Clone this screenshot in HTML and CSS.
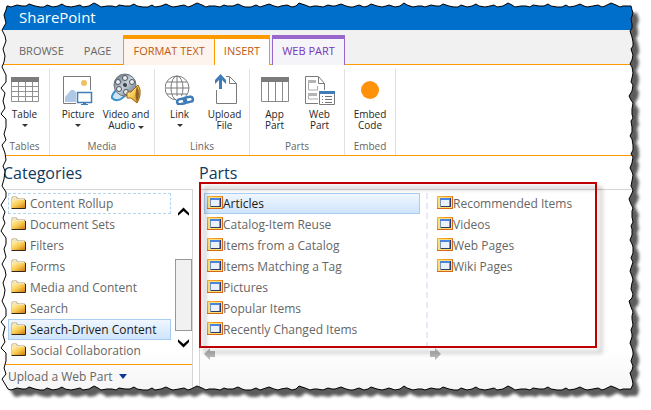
FILE: index.html
```html
<!DOCTYPE html>
<html lang="en">
<head>
    <meta charset="utf-8">
    <meta name="viewport" content="width=device-width, initial-scale=1.0">
    <title>SharePoint</title>
    <link rel="stylesheet" href="styles.css">
</head>

<body>
    <svg class="defs" aria-hidden="true">
        <defs>
            <linearGradient id="gold" x1="0" y1="0" x2="1" y2="1">
                <stop offset="0" stop-color="#fff3b0" />
                <stop offset=".5" stop-color="#f8c94f" />
                <stop offset="1" stop-color="#cf7a10" />
            </linearGradient>
            <linearGradient id="orange" x1="0" y1="0" x2="1" y2="1">
                <stop offset="0" stop-color="#ffb62e" />
                <stop offset="1" stop-color="#d0560e" />
            </linearGradient>
            <linearGradient id="metal" x1="0" y1="0" x2="1" y2="1">
                <stop offset="0" stop-color="#59636e" />
                <stop offset=".5" stop-color="#c9d3dc" />
                <stop offset="1" stop-color="#58626c" />
            </linearGradient>
            <symbol id="folder" viewBox="0 0 15 13">
                <path d="M.5 12V1.500L1.500.5h4l1.500 2H13.500l1 1V12z" fill="#a89878" />
                <path d="M1 2L2 1h3l1.500 2H13v2H1z" fill="#f5e6ba" />
                <path d="M1 4h13v8H1z" fill="url(#gold)" />
                <path d="M.5 12.500H14.500V4" fill="none" stroke="#332817" />
            </symbol>
            <symbol id="part" viewBox="0 0 16 13">
                <path d="M0 0h16v13H0z" fill="url(#orange)" />
                <path d="M1 1h14v11H1z" fill="#ffe078" />
                <path d="M3 2h10v9H3z" fill="#7d93b8" />
                <path d="M3 2h10v2H3z" fill="#4b83e0" />
                <path d="M4 4h8v6H4z" fill="#eaf1fc" />
                <path d="M13 2h1v9H4v-1h9z" fill="#2c3d63" />
                <path d="M15.500 1v12M0 12.500h16" stroke="#d6661a" />
            </symbol>
        </defs>
    </svg>

    <div class="page">
        <header>SharePoint</header>
        <nav>
            <a href="#">BROWSE</a>
            <a href="#">PAGE</a>
            <a href="#" class="tab format">FORMAT TEXT</a>
            <a href="#" class="tab insert">INSERT</a>
            <a href="#" class="tab webpart">WEB PART</a>
        </nav>

        <div class="ribbon">
            <section class="group tables">
                <div class="tools">
                    <button>
                        <svg class="icon" viewBox="0 0 30 32">
                            <path d="M1 4.500h28v24H1z" fill="#fff" />
                            <path d="M1.500 8v20.500h27V8M1 13.500h28M1 18.500h28M1 23.500h28M8.500 9v20M15.500 9v20M22.500 9v20" fill="none" stroke="#929292" />
                            <path d="M1 4h28v5H1z" fill="#7b7b7b" />
                        </svg>
                        <span>Table</span>
                        <i class="caret"></i>
                    </button>
                </div>
                <h2>Tables</h2>
            </section>
            <section class="group media">
                <div class="tools">
                    <button>
                        <svg class="icon" viewBox="0 0 30 32">
                            <path d="M.5 3.500h27v27H.5z" fill="#fff" stroke="#7b7b7b" />
                            <circle cx="21" cy="10" r="3" fill="#eec262" />
                            <path d="M2 29v-5l6-7h3l4 5v7z" fill="#aec8e6" />
                            <path d="M13 17h17v15H13z" fill="#fff" />
                            <path d="M14.500 19.500h14v10h-14z" fill="#fff" stroke="#3f7cb8" stroke-width="1.500" />
                            <path d="M20 30h3v1h2v1h-7v-1h2z" fill="#3f7cb8" />
                        </svg>
                        <span>Picture</span>
                        <i class="caret"></i>
                    </button>
                    <button>
                        <svg class="icon" viewBox="0 0 30 32">
                            <path d="M5 17q-5 6-4 8 4 4 9 1l5-4" fill="#cfe7f5" stroke="#3c93c7" stroke-width="2" />
                            <circle cx="14" cy="12" r="11" fill="url(#metal)" stroke="#6b747d" />
                            <g fill="#e9eef2" stroke="#4c5660">
                                <circle cx="14" cy="5" r="2.500" />
                                <circle cx="7" cy="9" r="2.500" />
                                <circle cx="8" cy="16" r="2.500" />
                                <circle cx="15" cy="19" r="2.500" />
                                <circle cx="21" cy="9" r="2.500" />
                            </g>
                            <circle cx="14" cy="12" r="2" fill="#38414a" />
                            <path d="M16 19h4l7-7q3 4 2 10-1 5-3 8l-6-5h-4z" fill="url(#gold)" stroke="#9a661d" />
                            <path d="M26 13q4 8 0 16-3-7 0-16" fill="#8d6329" />
                        </svg>
                        <span>Video and<br>Audio <i class="caret"></i></span>
                    </button>
                </div>
                <h2>Media</h2>
            </section>
            <section class="group links">
                <div class="tools">
                    <button>
                        <svg class="icon" viewBox="0 0 30 32">
                            <g fill="none" stroke="#7b7b7b">
                                <circle cx="12" cy="15" r="12" fill="#fff" />
                                <ellipse cx="12" cy="15" rx="6" ry="12" />
                                <path d="M12 3v24M0 15h24M2 9h20M2 21h20" />
                            </g>
                            <path d="M11 23h19v9H11z" fill="#fff" />
                            <g fill="none" stroke="#3f7cb8" stroke-width="2.500">
                                <rect x="12" y="26" width="9" height="5" rx="2.500" transform="rotate(-12 16 28)" />
                                <rect x="19" y="24" width="9" height="5" rx="2.500" transform="rotate(-12 24 27)" />
                            </g>
                        </svg>
                        <span>Link</span>
                        <i class="caret"></i>
                    </button>
                    <button>
                        <svg class="icon" viewBox="0 0 30 32">
                            <path d="M6.500 30.500v-27h13l7 7v20z" fill="#fff" stroke="#7b7b7b" />
                            <path d="M19.500 4v6.500h7" fill="none" stroke="#7b7b7b" />
                            <path d="M4 2h12v15H4z" fill="#fff" />
                            <path d="M10.500 1L16 7v4l-4-4v9H9V7l-4 4V7z" fill="#3f7cb8" />
                        </svg>
                        <span>Upload<br>File</span>
                    </button>
                </div>
                <h2>Links</h2>
            </section>
            <section class="group parts">
                <div class="tools">
                    <button>
                        <svg class="icon" viewBox="0 0 30 32">
                            <path d="M1.500 4.500h27v24h-27zM8.500 8v20M15.500 8v20M22.500 8v20" fill="#fff" stroke="#8a8a8a" />
                            <path d="M1 4h28v5H1z" fill="#7b7b7b" />
                        </svg>
                        <span>App<br>Part</span>
                    </button>
                    <button>
                        <svg class="icon" viewBox="0 0 30 32">
                            <path d="M.5 30.500v-27h13l6 7v20z" fill="#fff" stroke="#7b7b7b" />
                            <path d="M13.500 4v6.500h6" fill="none" stroke="#7b7b7b" />
                            <path d="M3.500 8v9h9v-4M3.500 20v6h10" fill="none" stroke="#aaa" />
                            <path d="M3 7h8v3H3zM3 20h9v3H3z" fill="#b5b5b5" />
                            <path d="M13 17h17v15H13z" fill="#fff" />
                            <path d="M14.500 18.500h15v13h-15z" fill="#fff" stroke="#7b7b7b" />
                            <path d="M14 18h16v3H14z" fill="#3f7cb8" />
                            <path d="M17 23.500h1m2 0h7M17 26.500h1m2 0h7M17 29.500h1m2 0h7" stroke="#777" />
                        </svg>
                        <span>Web<br>Part</span>
                    </button>
                </div>
                <h2>Parts</h2>
            </section>
            <section class="group embed">
                <div class="tools">
                    <button>
                        <svg class="icon" viewBox="0 0 30 32">
                            <circle cx="15" cy="17" r="9" fill="#ff9208" />
                        </svg>
                        <span>Embed<br>Code</span>
                    </button>
                </div>
                <h2>Embed</h2>
            </section>
        </div>

        <main>
            <section class="categories">
                <h1>Categories</h1>
                <div class="panel">
                    <div class="chooser">
                        <ul>
                            <li><button class="focused"><svg class="folder"><use href="#folder" /></svg>Content Rollup</button></li>
                            <li><button><svg class="folder"><use href="#folder" /></svg>Document Sets</button></li>
                            <li><button><svg class="folder"><use href="#folder" /></svg>Filters</button></li>
                            <li><button><svg class="folder"><use href="#folder" /></svg>Forms</button></li>
                            <li><button><svg class="folder"><use href="#folder" /></svg>Media and Content</button></li>
                            <li><button><svg class="folder"><use href="#folder" /></svg>Search</button></li>
                            <li><button class="selected"><svg class="folder"><use href="#folder" /></svg>Search-Driven Content</button></li>
                            <li><button><svg class="folder"><use href="#folder" /></svg>Social Collaboration</button></li>
                        </ul>
                        <div class="scrollbar">
                            <button aria-label="Scroll up"><svg viewBox="0 0 12 10"><path d="M0 9V6l6-6 6 6v3L6 4z" /></svg></button>
                            <div class="thumb"></div>
                            <button aria-label="Scroll down"><svg viewBox="0 0 12 10"><path d="M0 1v3l6 6 6-6V1L6 6z" /></svg></button>
                        </div>
                    </div>
                    <a href="#" class="upload">Upload a Web Part <svg viewBox="0 0 8 5"><path d="M0 0h8L4 5z" /></svg></a>
                </div>
            </section>

            <section class="webparts">
                <h1>Parts</h1>
                <div class="panel">
                    <div class="columns">
                        <ul>
                            <li><button class="selected"><svg class="part"><use href="#part" /></svg>Articles</button></li>
                            <li><button><svg class="part"><use href="#part" /></svg>Catalog-Item Reuse</button></li>
                            <li><button><svg class="part"><use href="#part" /></svg>Items from a Catalog</button></li>
                            <li><button><svg class="part"><use href="#part" /></svg>Items Matching a Tag</button></li>
                            <li><button><svg class="part"><use href="#part" /></svg>Pictures</button></li>
                            <li><button><svg class="part"><use href="#part" /></svg>Popular Items</button></li>
                            <li><button><svg class="part"><use href="#part" /></svg>Recently Changed Items</button></li>
                        </ul>
                        <ul>
                            <li><button><svg class="part"><use href="#part" /></svg>Recommended Items</button></li>
                            <li><button><svg class="part"><use href="#part" /></svg>Videos</button></li>
                            <li><button><svg class="part"><use href="#part" /></svg>Web Pages</button></li>
                            <li><button><svg class="part"><use href="#part" /></svg>Wiki Pages</button></li>
                        </ul>
                    </div>
                    <div class="pager">
                        <button aria-label="Previous"><svg viewBox="0 0 11 12"><path d="M0 6l6-6v3h5v6H6v3z" /></svg></button>
                        <button aria-label="Next"><svg viewBox="0 0 11 12"><path d="M11 6L5 0v3H0v6h5v3z" /></svg></button>
                    </div>
                    <div class="highlight"></div>
                </div>
            </section>
        </main>

        <!-- torn paper edge, the path is built in torn.js -->
        <svg class="torn" aria-hidden="true">
            <defs>
                <path id="edge" />
                <mask id="outer">
                    <rect width="100%" height="100%" fill="#fff" />
                    <use href="#edge" fill="#000" />
                </mask>
                <filter id="soft">
                    <feGaussianBlur stdDeviation="1.500" />
                </filter>
            </defs>
            <g mask="url(#outer)">
                <rect width="100%" height="100%" fill="#fff" />
                <use href="#edge" x="6" y="7" fill="#5c5c5c" filter="url(#soft)" />
            </g>
            <use href="#edge" fill="none" stroke="#000" stroke-width="1" />
        </svg>
    </div>
    <script src="torn.js"></script>
</body>
</html>
```
FILE: styles.css
```css
* {
    box-sizing: border-box;
}

body {
    margin: 0;
    background-color: #fff;
    color: #666;
    font-family: "Open Sans", "Noto Sans", sans-serif;
    font-size: 12px;
}

h1,
h2,
ul {
    margin: 0;
    padding: 0;
    font-weight: normal;
    list-style: none;
}

button {
    margin: 0;
    padding: 0;
    border: 0;
    background: none;
    color: inherit;
    font: inherit;
}

svg {
    display: block;
    flex: none;
}

.defs {
    position: absolute;
    width: 0;
    height: 0;
}

.page {
    position: relative;
    padding-bottom: 20px;
}

header {
    height: 30px;
    padding: 6px 19px 0;
    background-color: #006fcb;
    color: #fff;
    font-size: 15px;
    line-height: 22px;
}

/* Tabs */
nav {
    display: flex;
    height: 35px;
    padding-top: 5px;
    background-color: #f1f1f1;
    border-bottom: 1px solid #ff9900;
    font-size: 11px;
    line-height: 32px;
}

nav a {
    margin-left: 19px;
    color: #666;
    text-decoration: none;
}

nav a + a {
    margin-left: 20px;
}

nav a.tab {
    height: 30px;
    margin-left: 0;
    padding: 0 9px;
    border: 1px solid #ff9900;
    border-top-width: 4px;
    border-bottom: 0;
    line-height: 24px;
}

nav a.format {
    margin-left: 12px;
    background-color: #fef4ee;
    color: #c05a10;
    border-right: 0;
}

nav a.insert {
    background-color: #fff;
    color: #c05a10;
}

nav a.webpart {
    margin-left: 2px;
    background-color: #f5f4f8;
    color: #7a35b8;
    border-color: #9966cc;
}

/* Ribbon */
.ribbon {
    display: flex;
    height: 91px;
    padding-top: 4px;
    border-bottom: 1px solid #ff9900;
}

.group {
    display: flex;
    flex-direction: column;
    justify-content: space-between;
    padding-bottom: 1px;
    border-right: 1px solid #e1e1e1;
    text-align: center;
}

.tools {
    display: flex;
    justify-content: center;
    padding-top: 4px;
}

.tools button {
    display: flex;
    flex-direction: column;
    align-items: center;
    width: 45px;
    color: #262626;
    font-size: 10px;
    line-height: 11px;
    white-space: nowrap;
}

.icon {
    width: 30px;
    height: 32px;
    margin-bottom: 4px;
}

.caret {
    display: inline-block;
    border: 3px solid transparent;
    border-top-color: #333;
    border-bottom: 0;
}

button > .caret {
    margin-top: 4px;
}

.group h2 {
    font-size: 10px;
    line-height: 16px;
}

.tables {
    width: 50px;
}

.media {
    width: 105px;
}

.media button {
    width: 48px;
}

.links,
.parts {
    width: 95px;
}

.embed {
    width: 51px;
}

/* Web part picker */
main {
    display: flex;
    gap: 6px;
    padding-top: 5px;
}

main h1 {
    height: 28px;
    color: #0f3a60;
    font-size: 16px;
    line-height: 24px;
}

.categories {
    width: 193px;
    padding-left: 3px;
}

.webparts {
    flex: 1;
}

.panel {
    position: relative;
    height: 201px;
    border-top: 1px solid #d5d5d5;
    background: linear-gradient(#fff 80%, #f5f5f5);
}

.categories .panel {
    border-right: 1px solid #d5d5d5;
}

.webparts .panel {
    padding-top: 3px;
    border-left: 1px solid #d5d5d5;
}

.chooser {
    display: flex;
    height: 175px;
    padding: 3px 0 0 5px;
    border-bottom: 1px solid #ff9900;
}

.chooser ul {
    flex: 1;
}

li {
    height: 21px;
}

li button {
    display: flex;
    align-items: center;
    width: 100%;
    height: 21px;
    border: 1px solid transparent;
    white-space: nowrap;
}

li .focused {
    border: 1px dashed #b5d5f0;
}

li .selected {
    border-color: #a9cdf0;
    background: linear-gradient(#f0f7ff, #cfe4fb);
    color: #1a1a1a;
}

.folder {
    width: 15px;
    height: 13px;
    margin: 0 4px 2px 2px;
}

.part {
    width: 16px;
    height: 13px;
    margin: 0 0 2px 2px;
}

.scrollbar {
    display: flex;
    flex-direction: column;
    width: 17px;
    margin-left: 4px;
    padding-bottom: 16px;
}

.scrollbar button {
    padding: 14px 3px 0;
}

.scrollbar button:last-child {
    padding-top: 7px;
}

.scrollbar svg {
    width: 11px;
    height: 10px;
}

.thumb {
    flex: 1;
    margin-top: 42px;
    border: 1px solid #999;
    background-color: #f1f1f1;
}

.upload {
    display: flex;
    align-items: center;
    gap: 6px;
    padding-left: 5px;
    color: #666;
    line-height: 23px;
    text-decoration: none;
}

.upload svg {
    width: 8px;
    height: 5px;
    fill: #0b3a96;
}

.columns {
    display: flex;
    height: 155px;
}

.columns ul {
    width: 216px;
}

.columns ul:first-child {
    margin-left: 4px;
}

.columns ul + ul {
    margin-left: 6px;
    padding-left: 6px;
    border-left: 2px dashed #e8e8f8;
}

.pager {
    display: flex;
    justify-content: space-between;
    width: 241px;
    padding: 0 0 0 4px;
}

.pager svg {
    width: 11px;
    height: 12px;
    fill: #b5b5b5;
}

.highlight {
    position: absolute;
    top: -8px;
    left: -1px;
    right: 54px;
    height: 166px;
    border: 2px solid #c00000;
    filter: drop-shadow(5px 5px 2px rgba(0, 0, 0, .3));
    pointer-events: none;
}

.torn {
    position: absolute;
    top: 0;
    left: 0;
    width: 100%;
    height: 100%;
    pointer-events: none;
}
```
FILE: torn.js
```js
let page = document.querySelector(".page");
let edge = document.querySelector("#edge");

// how far the paper sticks in or out at each step
let small = [0, 1, -1, 0, 0, -2, 0, 1, 1, -1, 1, 0, -2, 0, 1, 0, -1, 1, 0, -3, -1, 1, 0];
let large = [2, 0, 2, -2, 1, 2, -1, 1, 0, -2, 2, 2, -3, 1, -1, 1, -3, 2];

function side(length, step, jags) {
    let points = [];
    for (let i = 0, at = 4; at < length - 4; i++) {
        points.push([at, jags[i % jags.length]]);
        at += step + (i * 3) % 4;
    }
    return points;
}

function tear() {
    let left = 4;
    let top = 6;
    let right = page.clientWidth - 20;
    let bottom = page.clientHeight - 21;
    let points = [[left + 3, top]];

    side(right - left, 3, small).forEach(p => points.push([left + p[0], top + p[1]]));
    points.push([right, top]);
    side(bottom - top, 3, small).forEach(p => points.push([right + 1 + p[1], top + p[0]]));
    points.push([right, bottom]);
    side(right - left, 3, small).reverse().forEach(p => points.push([left + p[0], bottom + p[1]]));
    side(bottom - top, 5, large).reverse().forEach(p => points.push([left + p[1], top + p[0]]));

    edge.setAttribute("d", "M" + points.join(" ") + "z");
}

tear();
window.addEventListener("resize", tear);
```
